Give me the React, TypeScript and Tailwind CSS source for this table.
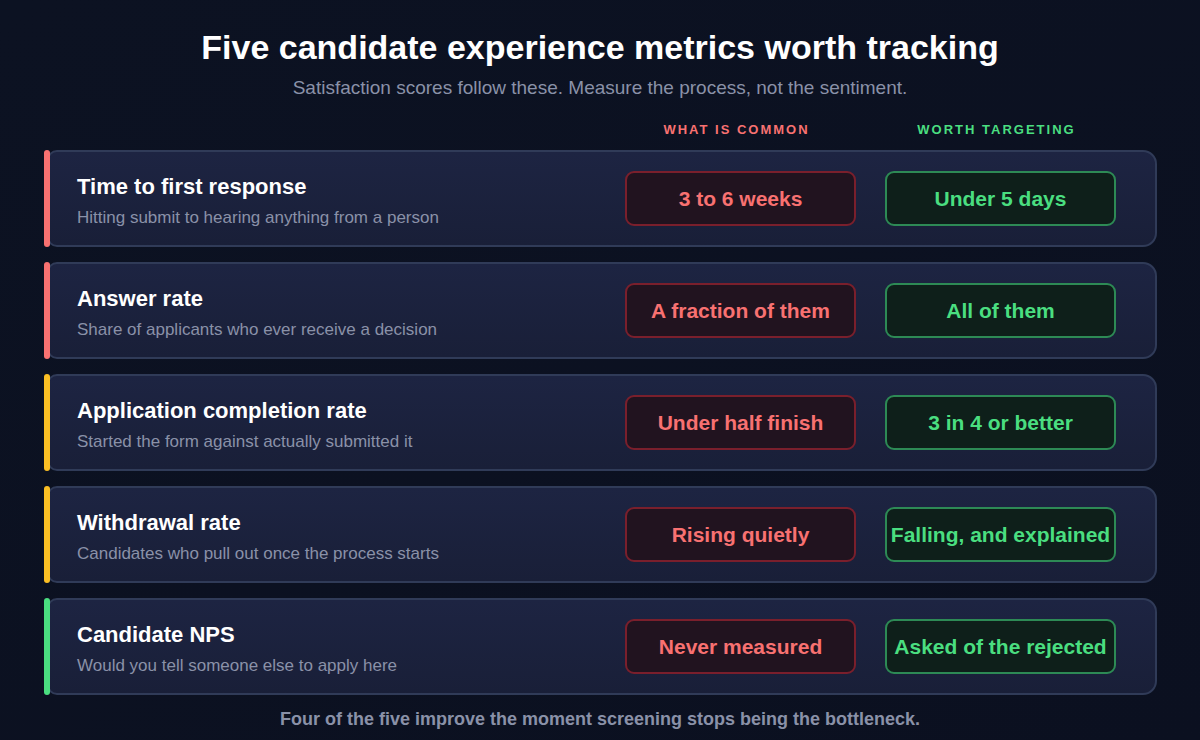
const rows = [
  { title: "Time to first response", sub: "Hitting submit to hearing anything from a person", common: "3 to 6 weeks", target: "Under 5 days", bar: "bg-[#f87171]" },
  { title: "Answer rate", sub: "Share of applicants who ever receive a decision", common: "A fraction of them", target: "All of them", bar: "bg-[#f87171]" },
  { title: "Application completion rate", sub: "Started the form against actually submitted it", common: "Under half finish", target: "3 in 4 or better", bar: "bg-[#fbbf24]" },
  { title: "Withdrawal rate", sub: "Candidates who pull out once the process starts", common: "Rising quietly", target: "Falling, and explained", bar: "bg-[#fbbf24]" },
  { title: "Candidate NPS", sub: "Would you tell someone else to apply here", common: "Never measured", target: "Asked of the rejected", bar: "bg-[#4ade80]" },
]

function Row({ title, sub, common, target, bar }: (typeof rows)[number]) {
  return (
    <div className="relative h-[97px] flex items-center rounded-r-[14px] rounded-l-[10px] border-2 border-[#303b58] bg-gradient-to-b from-[#1d2442] to-[#191f38]">
      <div className={`absolute left-[-5px] top-[-2px] bottom-[-2px] w-[6px] rounded-full ${bar}`} />
      <div className="flex-1 pl-[28px] pt-[4px] flex flex-col gap-[8px]">
        <div className="text-[22px] font-bold text-white leading-[26px]">{title}</div>
        <div className="text-[17px] text-[#8a91a8] leading-[20px]">{sub}</div>
      </div>
      <div className="w-[231px] h-[55px] flex items-center justify-center rounded-[9px] border-2 border-[#7a1f2c] bg-[#21131f] text-[21px] font-bold text-[#f87171] whitespace-nowrap">
        {common}
      </div>
      <div className="w-[231px] h-[55px] ml-[29px] mr-[39px] flex items-center justify-center rounded-[9px] border-2 border-[#2d8a55] bg-[#0e1f1a] text-[21px] font-bold text-[#4ade80] whitespace-nowrap">
        {target}
      </div>
    </div>
  )
}

export default function App() {
  return (
    <div className="w-[1200px] h-[740px] bg-gradient-to-br from-[#0c1222] to-[#0b1020] font-['Liberation_Sans',sans-serif] flex flex-col items-center overflow-hidden">
      <h1 className="mt-[27px] text-[34px] font-bold text-white leading-[40px]">
        Five candidate experience metrics worth tracking
      </h1>
      <p className="mt-[9px] text-[19px] text-[#8a91a8] leading-[24px]">
        Satisfaction scores follow these. Measure the process, not the sentiment.
      </p>
      <div className="w-[1110px] ml-[4px] mt-[22px] flex justify-end text-[13px] font-bold tracking-[2px] leading-[16px]">
        <div className="w-[231px] text-center text-[#f87171]">WHAT IS COMMON</div>
        <div className="w-[231px] ml-[29px] mr-[45px] text-center text-[#4ade80]">WORTH TARGETING</div>
      </div>
      <div className="w-[1110px] ml-[4px] mt-[12px] flex flex-col gap-[15px]">
        {rows.map((r) => (
          <Row key={r.title} {...r} />
        ))}
      </div>
      <p className="mt-[13px] text-[18px] font-bold text-[#8a91a8] leading-[22px]">
        Four of the five improve the moment screening stops being the bottleneck.
      </p>
    </div>
  )
}
